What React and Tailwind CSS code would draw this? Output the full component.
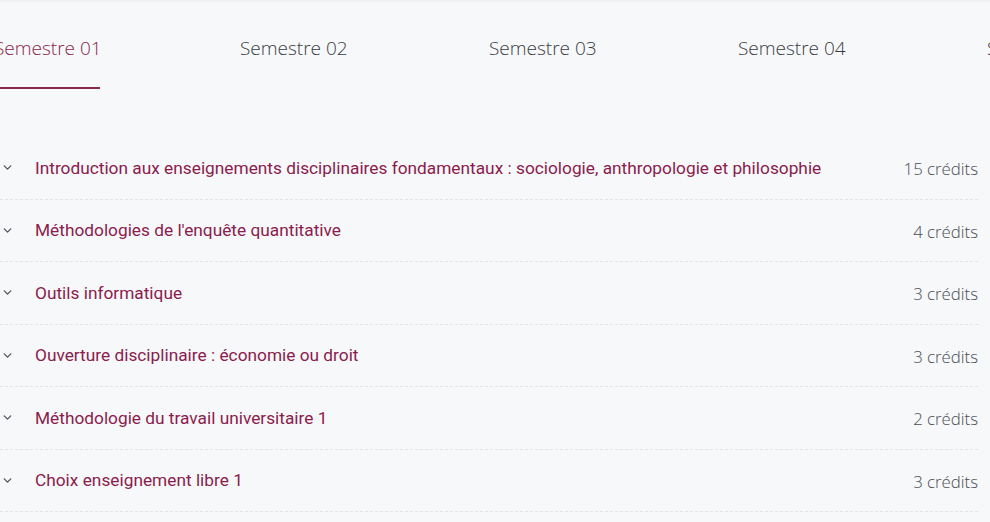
import { ChevronDown } from "lucide-react";

const semesters = ["Semestre 01", "Semestre 02", "Semestre 03", "Semestre 04", "Semestre 05"];

const courses = [
  { title: "Introduction aux enseignements disciplinaires fondamentaux : sociologie, anthropologie et philosophie", credits: "15 crédits" },
  { title: "Méthodologies de l'enquête quantitative", credits: "4 crédits" },
  { title: "Outils informatique", credits: "3 crédits" },
  { title: "Ouverture disciplinaire : économie ou droit", credits: "3 crédits" },
  { title: "Méthodologie du travail universitaire 1", credits: "2 crédits" },
  { title: "Choix enseignement libre 1", credits: "3 crédits" },
];

export default function App() {
  return (
    <div className="w-[990px] h-[522px] overflow-hidden bg-[#f7f8fa] border-t-2 border-[#eef0f2]">
      {/* Semester tabs */}
      <div className="flex -ml-[6px] pt-[32px]" style={{ fontFamily: '"Open Sans", sans-serif' }}>
        {semesters.map((s, i) => (
          <div key={s} className={`${i === 0 ? "w-[246px]" : "w-[249px]"} shrink-0 flex flex-col`}>
            <span
              className={`text-[19px] font-light leading-[28px] whitespace-nowrap ${
                i === 0 ? "text-[#8a2549]" : "text-[#3a3c44]"
              }`}
            >
              {s}
            </span>
            <div className={`ml-[6px] mt-[25px] w-[100px] h-[2px] ${i === 0 ? "bg-[#8a2a4d]" : "bg-transparent"}`} />
          </div>
        ))}
      </div>

      {/* Course list */}
      <div className="mt-[48px] pr-[12px]">
        {courses.map((c) => (
          <div
            key={c.title}
            className="h-[62.5px] flex items-center border-b border-dashed border-[#e2e4e8]"
          >
            <ChevronDown className="w-[13px] h-[13px] ml-[1px] text-[#55565e]" strokeWidth={2.5} />
            <span
              className="ml-[21px] flex-1 pt-[2px] text-[17.3px] text-[#8b1c4c] whitespace-nowrap"
              style={{ fontFamily: "Roboto, sans-serif" }}
            >
              {c.title}
            </span>
            <span
              className="pt-[2px] text-[16.8px] font-light text-[#4a4c55] whitespace-nowrap"
              style={{ fontFamily: '"Open Sans", sans-serif' }}
            >
              {c.credits}
            </span>
          </div>
        ))}
      </div>
    </div>
  );
}
